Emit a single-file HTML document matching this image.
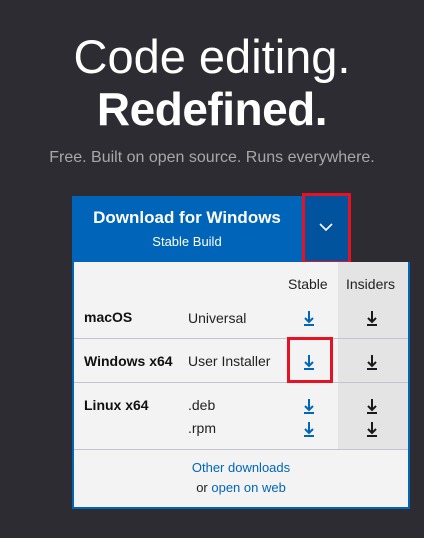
<!DOCTYPE html>
<html><head><meta charset="utf-8"><style>
*{margin:0;padding:0;box-sizing:border-box}
body{width:424px;height:538px;background:#2c2c32;font-family:"Liberation Sans",sans-serif;position:relative;overflow:hidden}
.a{position:absolute;white-space:nowrap}
.c{left:0;width:424px;text-align:center}
.dl{color:#0066b8}
svg{position:absolute}
</style></head><body>
<div class="a c" style="top:29px;font-size:47px;color:#fff;font-weight:300;letter-spacing:0px">Code editing.</div>
<div class="a c" style="top:82px;font-size:46px;color:#fff;font-weight:bold;letter-spacing:-0.5px">Redefined.</div>
<div class="a c" style="top:149px;font-size:16px;color:#a8a8ab">Free. Built on open source. Runs everywhere.</div>

<div class="a" style="left:72px;top:196px;width:277px;height:66px;background:#0065b8"></div>
<div class="a" style="left:303px;top:196px;width:46px;height:66px;background:#00539c"></div>
<div class="a" style="left:302px;top:193px;width:49px;height:71px;border:3px solid #e81123"></div>
<svg style="left:318px;top:221px" width="16" height="12"><path d="M2 3 L8 9 L14 3" stroke="#fff" stroke-width="1.6" fill="none"/></svg>
<div class="a" style="left:72px;top:208px;width:230px;text-align:center;color:#fff;font-weight:bold;font-size:17px">Download for Windows</div>
<div class="a" style="left:72px;top:234px;width:230px;text-align:center;color:#fff;font-size:13px">Stable Build</div>

<div class="a" style="left:72px;top:262px;width:338px;height:247px;background:#f3f3f3;border:2px solid #0065b8;border-top:none"></div>
<div class="a" style="left:338px;top:262px;width:70px;height:187px;background:#e4e4e4"></div>
<div class="a" style="left:74px;top:338px;width:334px;height:1px;background:#c4c4d0"></div>
<div class="a" style="left:74px;top:382px;width:334px;height:1px;background:#c4c4d0"></div>
<div class="a" style="left:74px;top:449px;width:334px;height:1px;background:#c4c4d0"></div>

<div class="a" style="left:288px;top:276px;font-size:14px;color:#222">Stable</div>
<div class="a" style="left:346px;top:276px;font-size:14px;color:#222">Insiders</div>

<div class="a" style="left:84px;top:309px;font-size:14px;font-weight:bold;color:#111">macOS</div>
<div class="a" style="left:188px;top:310px;font-size:14px;color:#222">Universal</div>
<div class="a" style="left:84px;top:353px;font-size:14px;font-weight:bold;color:#111">Windows x64</div>
<div class="a" style="left:188px;top:353px;font-size:14px;color:#222">User Installer</div>
<div class="a" style="left:84px;top:397px;font-size:14px;font-weight:bold;color:#111">Linux x64</div>
<div class="a" style="left:188px;top:397px;font-size:14px;color:#222">.deb</div>
<div class="a" style="left:188px;top:420px;font-size:14px;color:#222">.rpm</div>

<svg width="424" height="538" style="left:0;top:0">
<g stroke-width="2" fill="none">
<g stroke="#0066b8">
<path d="M309 311 V322 M305 318 L309 322 L313 318 M304 325 H314"/>
<path d="M309 355 V366 M305 362 L309 366 L313 362 M304 369 H314"/>
<path d="M309 399 V410 M305 406 L309 410 L313 406 M304 413 H314"/>
<path d="M309 422 V433 M305 429 L309 433 L313 429 M304 436 H314"/>
</g>
<g stroke="#1a1a1a">
<path d="M372 311 V322 M368 318 L372 322 L376 318 M367 325 H377"/>
<path d="M372 355 V366 M368 362 L372 366 L376 362 M367 369 H377"/>
<path d="M372 399 V410 M368 406 L372 410 L376 406 M367 413 H377"/>
<path d="M372 422 V433 M368 429 L372 433 L376 429 M367 436 H377"/>
</g>
</g>
</svg>
<div class="a" style="left:287px;top:337px;width:46px;height:46px;border:3px solid #e81123"></div>

<div class="a c" style="left:72px;width:338px;top:460px;font-size:13px" ><span class="dl">Other downloads</span></div>
<div class="a c" style="left:72px;width:338px;top:480px;font-size:13px;color:#222">or <span class="dl">open on web</span></div>
</body></html>
